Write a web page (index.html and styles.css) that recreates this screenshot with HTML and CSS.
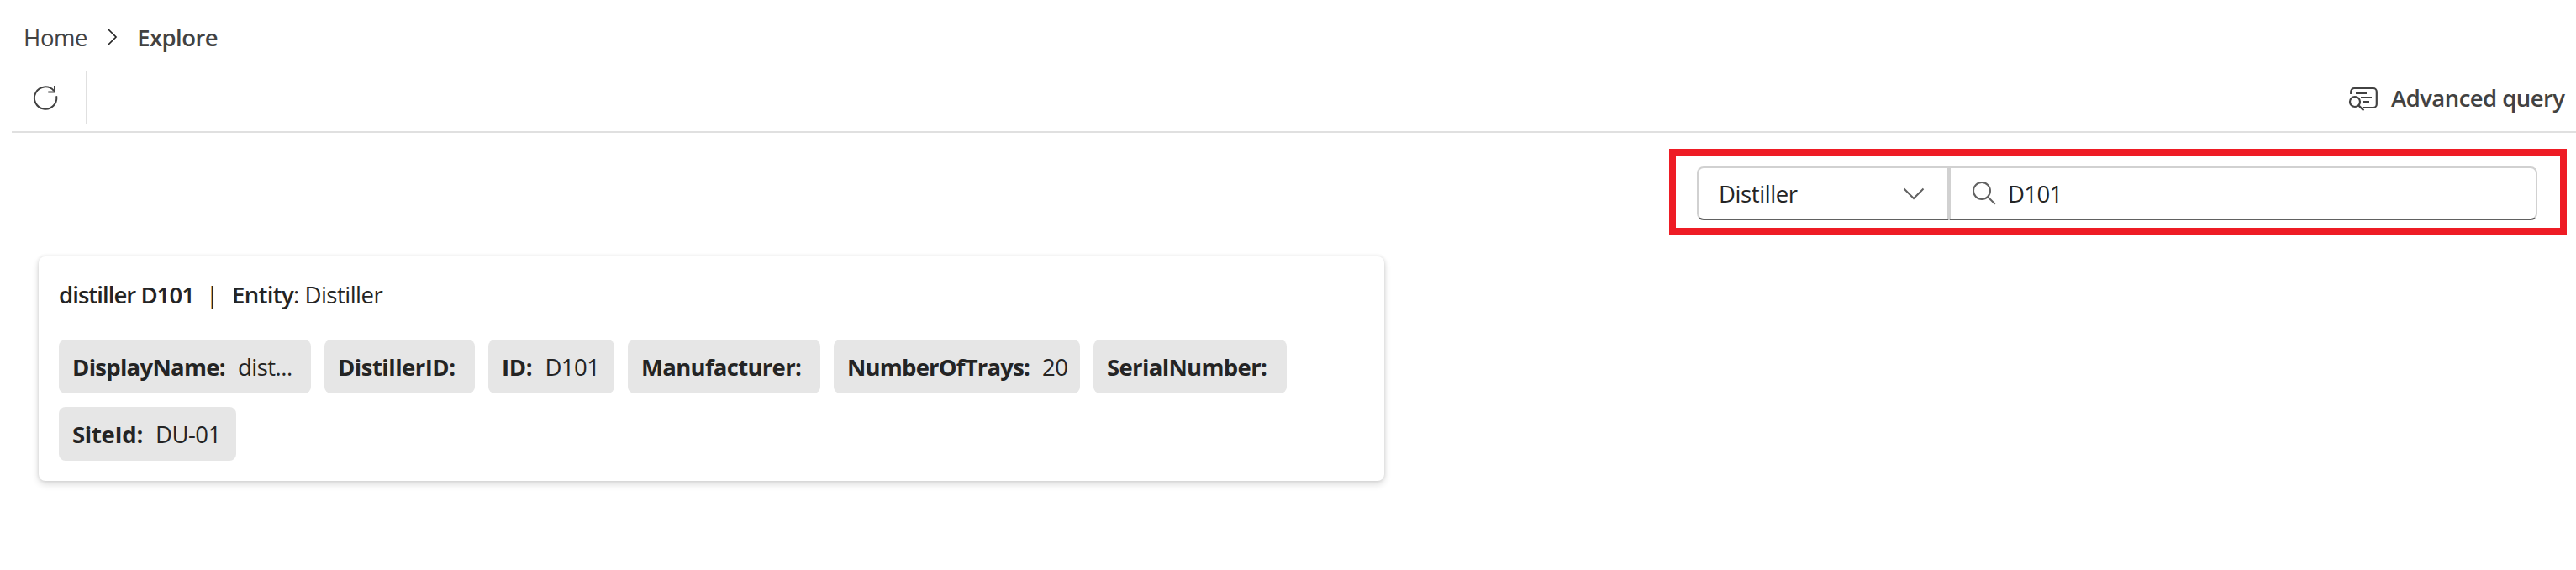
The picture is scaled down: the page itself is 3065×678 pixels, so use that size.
FILE: index.html
```html
<!DOCTYPE html>
<html lang="en">
<head>
<meta charset="utf-8">
<title>Explore</title>
<link rel="stylesheet" href="styles.css">
</head>
<body>
<nav class="breadcrumb">
  <span class="crumb">Home</span>
  <svg class="crumb-sep" width="12" height="20" viewBox="0 0 12 20"><path d="M1 1l9 9-9 9"/></svg>
  <span class="crumb current">Explore</span>
</nav>
<header class="toolbar">
  <div class="refresh">
    <svg width="30" height="30" viewBox="0 0 30 30"><path d="M28.1 13.2A13.2 13.2 0 1 1 25 6.8M26 1v7.4h-7.7"/></svg>
  </div>
  <div class="advanced">
    <svg width="36" height="30" viewBox="0 0 36 30"><path d="M3.2 9V6a4 4 0 0 1 4-4h22.6a4 4 0 0 1 4 4v15a4 4 0 0 1-4 4H18M9 8h13M15 13h13M17 18h8"/><circle cx="8" cy="18" r="6"/><path d="M12.4 22.4l6 6"/></svg>
    <span>Advanced query</span>
  </div>
</header>
<main>
  <section class="search-frame">
    <div class="select">
      <span>Distiller</span>
      <svg width="26" height="15" viewBox="0 0 26 15"><path d="M1.5 1.5L13 13 24.5 1.5"/></svg>
    </div>
    <div class="search">
      <svg width="30" height="30" viewBox="0 0 30 30"><circle cx="12" cy="12" r="10"/><path d="M19.2 19.2l8.6 8.6"/></svg>
      <span class="query">D101</span>
    </div>
  </section>
  <article class="card">
    <h2 class="title"><b class="name">distiller D101</b><span class="bar">|</span><b class="entity">Entity</b><span class="type">: Distiller</span></h2>
    <div class="chips">
      <div class="chip display-name"><b>DisplayName:</b><span>dist...</span></div>
      <div class="chip distiller-id"><b>DistillerID:</b></div>
      <div class="chip id"><b>ID:</b><span>D101</span></div>
      <div class="chip manufacturer"><b>Manufacturer:</b></div>
      <div class="chip trays"><b>NumberOfTrays:</b><span>20</span></div>
      <div class="chip serial"><b>SerialNumber:</b></div>
      <div class="chip site"><b>SiteId:</b><span>DU-01</span></div>
    </div>
  </article>
</main>
</body>
</html>
```
FILE: styles.css
```css
* { box-sizing: border-box; }
body {
  margin: 0;
  min-height: 678px;
  background: #fff;
  color: #242424;
  font: 27.5px/36px "Segoe UI", "Open Sans", "Noto Sans", sans-serif;
  white-space: nowrap;
  overflow: hidden;
}
svg { display: block; flex: none; fill: none; stroke: #424242; stroke-width: 2; }

.breadcrumb { display: flex; align-items: center; height: 84px; padding: 5px 0 0 28px; color: #424242; letter-spacing: -0.4px; }
.crumb-sep { margin: -2px 23px 0 24px; stroke: #242424; stroke-width: 1.7; }
.current { font-weight: 600; letter-spacing: -0.55px; }

.toolbar {
  display: flex;
  justify-content: space-between;
  height: 74px;
  margin-left: 14px;
  padding-bottom: 8px;
  border-bottom: 2px solid #e0e0e0;
  color: #424242;
  font-weight: 600;
}
.refresh { display: flex; align-items: center; width: 90px; height: 64px; padding-left: 25px; border-right: 2px solid #e0e0e0; }
.advanced { display: flex; align-items: center; gap: 15px; width: 271px; height: 64px; letter-spacing: -0.55px; }
.advanced span { padding-top: 1px; }
.advanced svg { margin-top: 4px; stroke-width: 2.2; }

main { display: flex; flex-direction: column; }
.search-frame {
  display: flex;
  align-self: flex-end;
  width: 1068px;
  height: 102px;
  margin: 19px 11px 0 0;
  padding: 13px 27px 0 25px;
  border: 8px solid #ee1c25;
}
.select, .search { display: flex; align-items: center; height: 64px; border: 2px solid #d1d1d1; border-bottom-color: #616161; }
.select { width: 300px; justify-content: space-between; padding: 0 27px 0 24px; border-radius: 8px 0 0 8px; letter-spacing: -0.4px; }
.select span, .query { padding-top: 1px; }
.search { flex: 1; padding-left: 25px; border-radius: 0 8px 8px 0; }
.select svg, .search svg { stroke: #616161; }
.query { margin-left: 13px; letter-spacing: -0.6px; }

.card {
  width: 1601px;
  height: 267px;
  margin: 26px 0 0 46px;
  padding: 28px 24px 24px;
  border-radius: 8px;
  box-shadow: 0 0 4px rgba(0, 0, 0, .12), 0 4px 8px rgba(0, 0, 0, .14);
}
.title { display: flex; margin: 0 0 35px; font-size: 27.5px; font-weight: 400; }
.title b { font-weight: 600; }
.name { width: 163px; letter-spacing: -0.95px; }
.bar { width: 43px; padding-left: 12px; }
.entity { letter-spacing: -0.65px; }
.type { letter-spacing: -0.5px; }

.chips { display: flex; flex-wrap: wrap; gap: 16px; }
.chip { display: flex; align-items: center; gap: 15px; height: 64px; padding: 1px 16px 0; border-radius: 8px; background: #e6e6e6; }
.chip span { letter-spacing: -0.5px; }
.display-name { width: 300px; letter-spacing: -0.72px; }
.distiller-id { width: 179px; letter-spacing: -0.5px; }
.id { width: 150px; letter-spacing: -0.3px; }
.manufacturer { width: 229px; letter-spacing: -0.7px; }
.trays { width: 293px; letter-spacing: -0.8px; }
.serial { width: 230px; letter-spacing: -0.65px; }
.site { width: 211px; letter-spacing: -0.3px; }
```
